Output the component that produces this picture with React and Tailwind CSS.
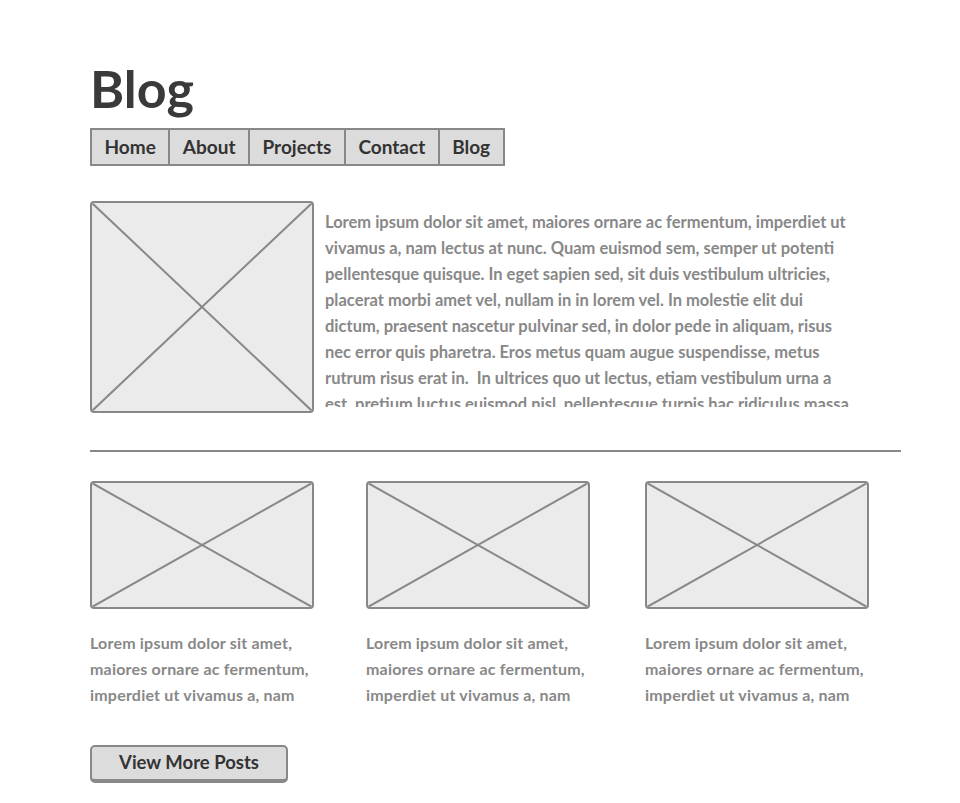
import React from 'react';

const navItems = ['Home', 'About', 'Projects', 'Contact', 'Blog'];

const Placeholder = ({ className }) => (
  <div className={`relative overflow-hidden rounded-[4px] border-2 border-[#888] bg-[#ebebeb] ${className}`}>
    <svg className="absolute inset-0 h-full w-full" preserveAspectRatio="none" viewBox="0 0 100 100">
      <line x1="0" y1="0" x2="100" y2="100" stroke="#888" strokeWidth="2" vectorEffect="non-scaling-stroke" />
      <line x1="100" y1="0" x2="0" y2="100" stroke="#888" strokeWidth="2" vectorEffect="non-scaling-stroke" />
    </svg>
  </div>
);

// lines broken the way the wireframe shows them
const introLines = [
  'Lorem ipsum dolor sit amet, maiores ornare ac fermentum, imperdiet ut',
  'vivamus a, nam lectus at nunc. Quam euismod sem, semper ut potenti',
  'pellentesque quisque. In eget sapien sed, sit duis vestibulum ultricies,',
  'placerat morbi amet vel, nullam in in lorem vel. In molestie elit dui',
  'dictum, praesent nascetur pulvinar sed, in dolor pede in aliquam, risus',
  'nec error quis pharetra. Eros metus quam augue suspendisse, metus',
  'rutrum risus erat in.\u00a0 In ultrices quo ut lectus, etiam vestibulum urna a',
  'est, pretium luctus euismod nisl, pellentesque turpis hac ridiculus massa.',
];

const posts = [1, 2, 3];

export default function App() {
  return (
    <div className="min-h-screen bg-white font-['Lato',sans-serif] font-bold">
      <div className="w-[811px] ml-[90px] pt-[56px]">
        <h1 className="text-[52px] leading-[64px] text-[#3a3a3a]">Blog</h1>

        {/* nav */}
        <nav className="mt-[8px] flex w-max border-2 border-[#888] bg-[#dcdcdc]">
          {navItems.map((item, i) => (
            <div
              key={item}
              className={`px-[12.5px] h-[34px] flex items-center text-[19px] text-[#333] ${i > 0 ? 'border-l-2 border-[#888]' : ''}`}
            >
              {item}
            </div>
          ))}
        </nav>

        {/* feature */}
        <div className="mt-[35px] flex gap-[11px]">
          <Placeholder className="w-[224px] h-[212px] shrink-0" />
          <p className="w-[560px] h-[198px] mt-[8px] overflow-hidden text-[16.5px] leading-[26px] text-[#888]">
            {introLines.map((l) => (
              <span key={l} className="block whitespace-nowrap">{l}</span>
            ))}
          </p>
        </div>

        <hr className="mt-[37px] border-0 border-t-2 border-[#888]" />

        {/* posts */}
        <div className="mt-[29px] grid grid-cols-[256px_259px_256px] gap-x-[20px]">
          {posts.map((p) => (
            <div key={p}>
              <Placeholder className="w-[224px] h-[128px]" />
              <p className="mt-[21px] w-[240px] text-[16px] leading-[26px] tracking-[0.2px] text-[#888]">
                Lorem ipsum dolor sit amet, maiores ornare ac fermentum, imperdiet ut vivamus a, nam
              </p>
            </div>
          ))}
        </div>

        <button className="mt-[37px] w-[198px] h-[38px] rounded-[5px] border-2 border-b-[4px] border-[#888] bg-[#dcdcdc] text-[18.5px] text-[#333]">
          View More Posts
        </button>
      </div>
    </div>
  );
}
